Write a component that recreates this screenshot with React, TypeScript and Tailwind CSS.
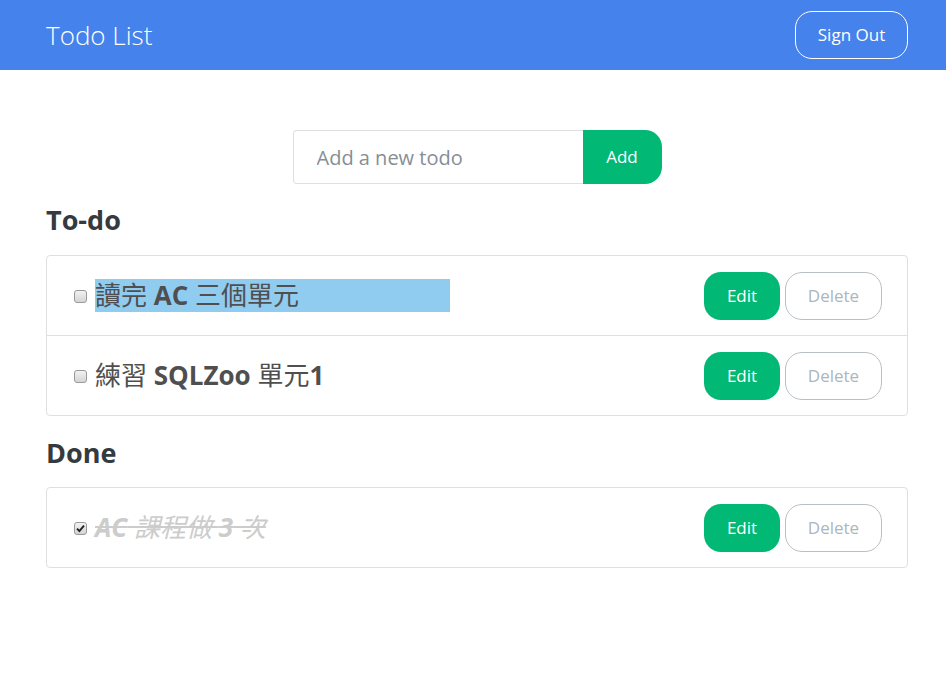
import { useState } from "react";

type Todo = {
  id: number;
  parts: { text: string; latin?: boolean }[];
  done: boolean;
  selected?: boolean;
};

const todos: Todo[] = [
  {
    id: 1,
    parts: [{ text: "讀完 " }, { text: "AC", latin: true }, { text: " 三個單元" }],
    done: false,
    selected: true,
  },
  {
    id: 2,
    parts: [{ text: "練習 " }, { text: "SQLZoo", latin: true }, { text: " 單元" }, { text: "1", latin: true }],
    done: false,
  },
  {
    id: 3,
    parts: [{ text: "AC", latin: true }, { text: " 課程做 " }, { text: "3", latin: true }, { text: " 次" }],
    done: true,
  },
];

const sans = "font-['Open_Sans','Noto_Sans','Noto_Sans_CJK_TC',sans-serif]";

// old-style grey native checkbox
const Check = ({ checked, onToggle }: { checked: boolean; onToggle: () => void }) => (
  <button
    onClick={onToggle}
    className="w-[13px] h-[13px] mr-[8px] mt-[2px] shrink-0 rounded-[3px] border border-[#9a9a9a] bg-gradient-to-b from-[#f2f2f2] to-[#d4d4d4] flex items-center justify-center p-0"
  >
    {checked && (
      <svg width="9" height="9" viewBox="0 0 9 9">
        <path d="M1 4.6 L3.4 7 L8 1.6" stroke="#222" strokeWidth="1.9" fill="none" />
      </svg>
    )}
  </button>
);

const TodoRow = ({ todo, last }: { todo: Todo; last: boolean }) => {
  const [checked, setChecked] = useState(todo.done);
  return (
    <div
      className={`flex items-center pl-[27px] pr-[25px] ${last ? "h-[79px]" : "h-[80px] border-b border-[#dfdfdf]"}`}
    >
      <Check checked={checked} onToggle={() => setChecked(!checked)} />
      <div className="flex-1 flex items-center">
        <span
          className={`inline-block whitespace-pre text-[26px] leading-[33px] ${
            todo.selected ? "bg-[#90cbf0] w-[355px]" : ""
          } ${todo.done ? "italic line-through text-[#cccccc]" : "text-[#4f4f4f]"} font-['Open_Sans','Noto_Sans_CJK_TC',sans-serif]`}
        >
          {todo.parts.map((p, i) => (
            <span key={i} className={p.latin ? "font-bold" : "font-normal"}>
              {p.text}
            </span>
          ))}
        </span>
      </div>
      <div className="flex gap-[5px]">
        <button className="w-[76px] h-[48px] rounded-[17px] bg-[#02b875] text-white text-[17px]">
          Edit
        </button>
        <button className="w-[97px] h-[48px] rounded-[17px] border border-[#b8bfc6] text-[#adb5bd] text-[17px] bg-white">
          Delete
        </button>
      </div>
    </div>
  );
};

export default function App() {
  const open = todos.filter((t) => !t.done);
  const done = todos.filter((t) => t.done);

  return (
    <div className={`min-h-[685px] bg-white ${sans}`}>
      {/* navbar */}
      <header className="h-[70px] bg-[#4582ec] flex items-center justify-between pl-[46px] pr-[38px]">
        <span className="text-white text-[26px] font-light">Todo List</span>
        <button className="w-[113px] h-[48px] border border-white rounded-[17px] text-white text-[17px]">
          Sign Out
        </button>
      </header>

      <main className="pl-[46px] pr-[38px]">
        <div className="flex justify-center pt-[60px]">
          <input
            placeholder="Add a new todo"
            className="w-[290px] h-[54px] border border-[#dfdfdf] border-r-0 rounded-l-[4px] px-[23px] text-[20px] text-[#555] placeholder:text-[#868e96] outline-none"
          />
          <button className="w-[79px] h-[54px] bg-[#02b875] text-white text-[17px] rounded-r-[17px]">
            Add
          </button>
        </div>

        <h2 className="mt-[21px] mb-[20px] text-[27px] font-bold text-[#343a40] leading-[30px]">To-do</h2>
        <div className="border border-[#dfdfdf] rounded-[4px]">
          {open.map((t, i) => (
            <TodoRow key={t.id} todo={t} last={i === open.length - 1} />
          ))}
        </div>

        <h2 className="mt-[22px] mb-[19px] text-[27px] font-bold text-[#343a40] leading-[30px]">Done</h2>
        <div className="border border-[#dfdfdf] rounded-[4px]">
          {done.map((t, i) => (
            <TodoRow key={t.id} todo={t} last={i === done.length - 1} />
          ))}
        </div>
      </main>
    </div>
  );
}
